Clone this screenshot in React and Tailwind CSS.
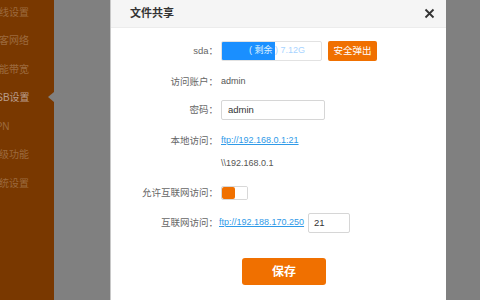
import React from 'react';

const menu = [
  { name: '无线设置' },
  { name: '访客网络' },
  { name: '智能带宽' },
  { name: 'USB设置', active: true },
  { name: 'VPN' },
  { name: '高级功能' },
  { name: '系统设置' },
];

function Row({ label, children, className = '' }) {
  return (
    <div className={`flex items-center h-[20px] ${className}`}>
      <span className="w-[107px] shrink-0 text-right text-[9.5px] text-[#666]">{label}</span>
      <div className="ml-[3px] flex items-center">{children}</div>
    </div>
  );
}

export default function App() {
  return (
    <div className="flex w-[480px] h-[300px] overflow-hidden bg-[#808080] font-['Liberation_Sans','Noto_Sans_CJK_SC',sans-serif]">
      <div className="relative w-[54px] shrink-0 bg-[#793800] overflow-hidden">
        <ul className="-mt-[2px]">
          {menu.map((item) => (
            <li
              key={item.name}
              className={`h-[28.5px] flex items-center -ml-[11px] whitespace-nowrap text-[10px] ${
                item.active ? 'text-[#b89c8c]' : 'text-[#9c6a3e]'
              }`}
            >
              {item.name}
            </li>
          ))}
        </ul>
        <span className="absolute right-0 top-[92px] w-0 h-0 border-y-[5px] border-y-transparent border-r-[6px] border-r-[#808080]" />
      </div>

      <div className="flex-1 pl-[56px]">
        <div className="w-[336px] h-full bg-white border-l border-[#c8c8c8] flex flex-col">
          <div className="h-[28px] bg-[#f5f5f5] border-b border-[#ececec] flex items-center justify-between pl-[19px] pr-[11px]">
            <span className="text-[11px] font-bold text-[#333]">文件共享</span>
            <svg width="11" height="11" viewBox="0 0 11 11">
              <path d="M1.5 1.5 L9.5 9.5 M9.5 1.5 L1.5 9.5" stroke="#333" strokeWidth="1.8" />
            </svg>
          </div>

          <Row label="sda：" className="mt-[13px]">
            <div className="relative w-[101px] h-[20px] border border-[#e2e2e2] rounded-[2px] overflow-hidden">
              <span className="absolute left-[27px] top-0 h-full flex items-center text-[9px] text-[#a8d4ff] whitespace-nowrap">( 剩余 ) 7.12G</span>
              <div className="absolute left-0 top-0 h-full w-[53px] bg-[#1a8fff] overflow-hidden">
                <span className="absolute left-[27px] top-0 h-full flex items-center text-[9px] text-[#dcefff] whitespace-nowrap">( 剩余 ) 7.12G</span>
              </div>
            </div>
            <button className="ml-[6px] w-[49px] h-[20px] rounded-[2px] bg-[#f07000] text-white text-[9.5px]">安全弹出</button>
          </Row>

          <Row label="访问账户：" className="mt-[11px]">
            <span className="text-[9px] text-[#555]">admin</span>
          </Row>

          <Row label="密码：" className="mt-[8px]">
            <div className="w-[104px] h-[20px] border border-[#d6d6d6] rounded-[2px] flex items-center pl-[6px] text-[9.5px] text-[#333]">admin</div>
          </Row>

          <Row label="本地访问：" className="mt-[11px]">
            <span className="text-[9px] text-[#2f9ae8] underline">ftp://192.168.0.1:21</span>
          </Row>

          <Row label="" className="mt-[3px]">
            <span className="text-[9px] text-[#555]">\\192.168.0.1</span>
          </Row>

          <Row label="允许互联网访问：" className="mt-[9px]">
            <div className="flex w-[27px] h-[14px] border border-[#d8d8d8] rounded-[2px] overflow-hidden">
              <div className="w-[13px] h-full bg-[#f07000] rounded-[2px]" />
              <div className="flex-1 bg-white" />
            </div>
          </Row>

          <Row label="互联网访问：" className="mt-[10px]">
            <span className="-ml-[2px] text-[9px] text-[#2f9ae8] underline">ftp://192.188.170.250</span>
            <div className="ml-[4px] w-[42px] h-[20px] border border-[#d6d6d6] rounded-[2px] flex items-center pl-[5px] text-[9.5px] text-[#333]">21</div>
          </Row>

          <div className="mt-[25px] pl-[131px]">
            <button className="w-[84px] h-[27px] rounded-[3px] bg-[#f07000] text-white text-[12px] font-bold">保存</button>
          </div>
        </div>
      </div>
    </div>
  );
}
